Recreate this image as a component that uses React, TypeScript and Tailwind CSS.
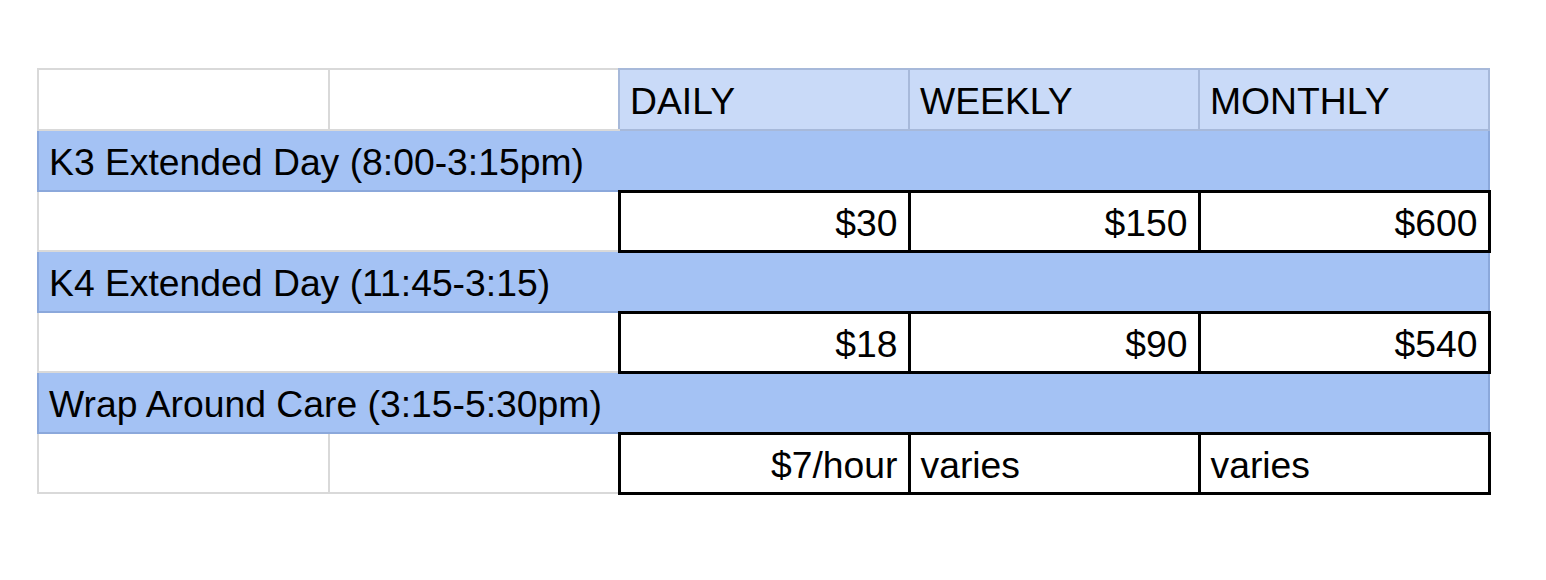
import React from "react";

const gray = "border-2 border-[#d9d9d9]";
const hdr = "border-2 border-[#a7b9da] bg-[#c9daf8] text-left pl-[10px]";
const sec = "border-2 border-[#8ba8db] bg-[#a4c2f4] text-left pl-[10px]";
const blk = "border-[3px] border-black bg-white";

export default function App() {
  const cellText = "align-middle whitespace-nowrap pt-[5px]";
  return (
    <div
      className="w-[1546px] h-[580px] bg-white pl-[37px] pt-[68px]"
      style={{ fontFamily: '"Liberation Sans", Arial, sans-serif' }}
    >
      <table className="table-fixed border-collapse w-[1451px] text-[37.3px] leading-none text-black">
        <colgroup>
          <col className="w-[291px]" />
          <col className="w-[290px]" />
          <col className="w-[290px]" />
          <col className="w-[290px]" />
          <col className="w-[290px]" />
        </colgroup>
        <tbody>
          <tr className="h-[61px]">
            <td className={gray}></td>
            <td className={`${gray} border-r-[#a7b9da]`}></td>
            <td className={`${hdr} ${cellText}`}>DAILY</td>
            <td className={`${hdr} ${cellText}`}>WEEKLY</td>
            <td className={`${hdr} ${cellText}`}>MONTHLY</td>
          </tr>
          <tr className="h-[61px]">
            <td colSpan={5} className={`${sec} ${cellText}`}>K3 Extended Day (8:00-3:15pm)</td>
          </tr>
          <tr className="h-[60px]">
            <td colSpan={2} className={gray}></td>
            <td className={`${blk} ${cellText} text-right pr-[10px]`}>$30</td>
            <td className={`${blk} ${cellText} text-right pr-[10px]`}>$150</td>
            <td className={`${blk} ${cellText} text-right pr-[10px]`}>$600</td>
          </tr>
          <tr className="h-[61px]">
            <td colSpan={5} className={`${sec} ${cellText}`}>K4 Extended Day (11:45-3:15)</td>
          </tr>
          <tr className="h-[60px]">
            <td colSpan={2} className={gray}></td>
            <td className={`${blk} ${cellText} text-right pr-[10px]`}>$18</td>
            <td className={`${blk} ${cellText} text-right pr-[10px]`}>$90</td>
            <td className={`${blk} ${cellText} text-right pr-[10px]`}>$540</td>
          </tr>
          <tr className="h-[61px]">
            <td colSpan={5} className={`${sec} ${cellText}`}>Wrap Around Care (3:15-5:30pm)</td>
          </tr>
          <tr className="h-[60px]">
            <td className={gray}></td>
            <td className={gray}></td>
            <td className={`${blk} ${cellText} text-right pr-[10px]`}>$7/hour</td>
            <td className={`${blk} ${cellText} text-left pl-[10px]`}>varies</td>
            <td className={`${blk} ${cellText} text-left pl-[10px]`}>varies</td>
          </tr>
        </tbody>
      </table>
    </div>
  );
}
